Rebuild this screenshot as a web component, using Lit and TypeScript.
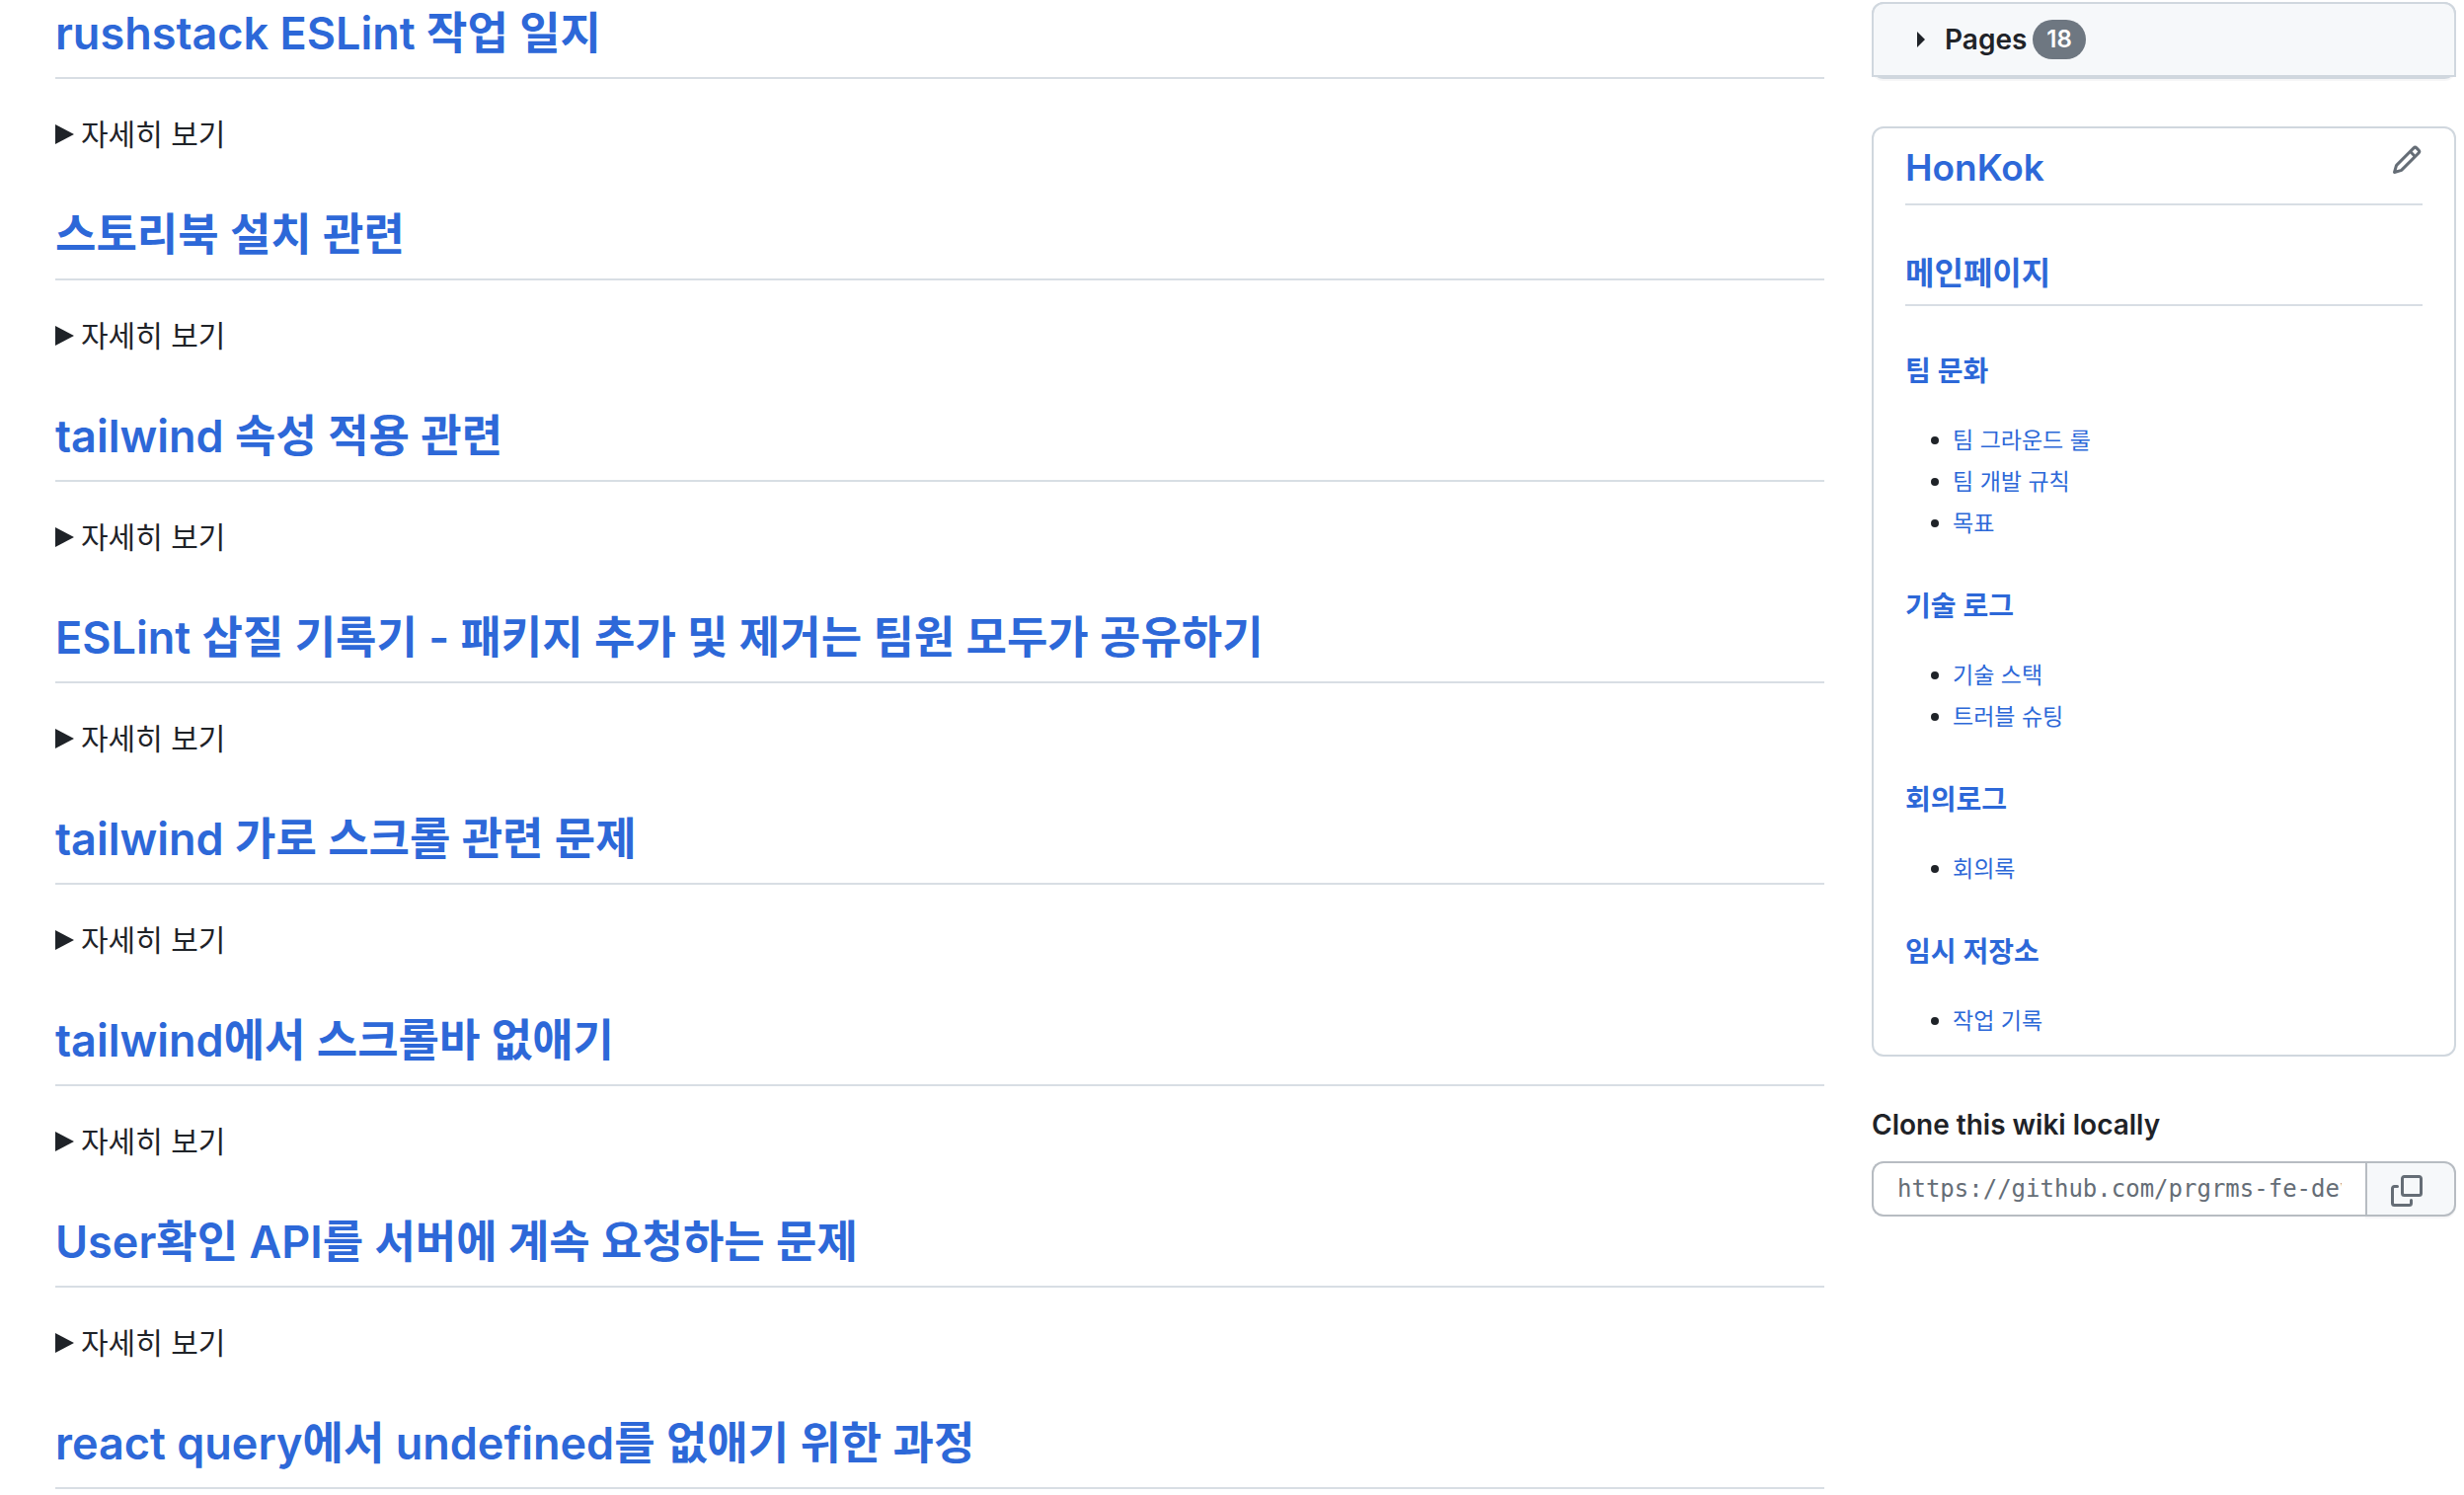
import { LitElement, html, css, nothing } from "lit";
import { customElement } from "lit/decorators.js";

const entries = [
  { title: "rushstack ESLint 작업 일지", more: true },
  { title: "스토리북 설치 관련", more: true },
  { title: "tailwind 속성 적용 관련", more: true },
  { title: "ESLint 삽질 기록기 - 패키지 추가 및 제거는 팀원 모두가 공유하기", more: true },
  { title: "tailwind 가로 스크롤 관련 문제", more: true },
  { title: "tailwind에서 스크롤바 없애기", more: true },
  { title: "User확인 API를 서버에 계속 요청하는 문제", more: true },
  { title: "react query에서 undefined를 없애기 위한 과정", more: false },
];

const groups = [
  { title: "팀 문화", links: ["팀 그라운드 룰", "팀 개발 규칙", "목표"] },
  { title: "기술 로그", links: ["기술 스택", "트러블 슈팅"] },
  { title: "회의로그", links: ["회의록"] },
  { title: "임시 저장소", links: ["작업 기록"] },
];

const shared = css`
  :host {
    display: block;
  }
  * {
    box-sizing: border-box;
  }
  a {
    color: #2d68d8;
    text-decoration: none;
  }
  h1, h2, h3, ul {
    margin: 0;
    padding: 0;
  }
  summary {
    cursor: pointer;
    list-style: none;
  }
  summary::-webkit-details-marker {
    display: none;
  }
`;

@customElement("wiki-content")
export class WikiContent extends LitElement {
  static styles = [
    shared,
    css`
      .title {
        padding-bottom: 14px;
        border-bottom: 2px solid #d8dee4;
        font-size: 45px;
        font-weight: 600;
        line-height: 60px;
      }
      .more {
        margin: 32px 0 48px;
      }
      .toggle {
        display: flex;
        align-items: center;
        gap: 6px;
        width: max-content;
        font-size: 30px;
        line-height: 48px;
      }
      .marker {
        width: 20px;
        height: 22px;
        fill: currentColor;
      }
    `,
  ];

  render() {
    return html`${entries.map(
      (entry) => html`
        <h2 class="title"><a href="#">${entry.title}</a></h2>
        ${entry.more
          ? html`
              <details class="more">
                <summary class="toggle">
                  <svg class="marker" viewBox="0 0 20 22" aria-hidden="true"><path d="M0 1v20l19-10z" /></svg>
                  자세히 보기
                </summary>
              </details>
            `
          : nothing}
      `
    )}`;
  }
}

@customElement("wiki-sidebar")
export class WikiSidebar extends LitElement {
  static styles = [
    shared,
    css`
      .box {
        border: 2px solid #d0d7de;
        border-radius: 12px;
      }
      .pages {
        margin-bottom: 48px;
        box-shadow: 0 2px 0 rgba(31, 35, 40, 0.04);
      }
      .pages-head {
        display: flex;
        align-items: center;
        height: 76px;
        margin: -2px -2px 0;
        padding: 0 44px;
        border: 2px solid #d0d7de;
        border-radius: 12px 12px 0 0;
        background: #f6f8fa;
        font-size: 28px;
        font-weight: 600;
      }
      .caret {
        width: 8px;
        height: 16px;
        margin-right: 20px;
        fill: currentColor;
      }
      .count {
        margin-left: 6px;
        padding: 0 14px;
        border-radius: 20px;
        background: #6e7781;
        color: #fff;
        font-size: 24px;
        font-weight: 600;
        line-height: 40px;
        text-align: center;
      }
      .nav {
        padding: 16px 32px;
      }
      .nav-top {
        display: flex;
        align-items: flex-start;
        justify-content: space-between;
        border-bottom: 2px solid #d8dee4;
      }
      .name {
        padding-bottom: 12px;
        font-size: 37px;
        font-weight: 600;
        line-height: 48px;
      }
      .edit {
        display: flex;
        color: #656d76;
      }
      .icon {
        width: 32px;
        height: 32px;
        fill: currentColor;
      }
      .main-page {
        margin-top: 48px;
        padding-bottom: 10px;
        border-bottom: 2px solid #d8dee4;
        font-size: 32px;
        font-weight: 600;
        line-height: 42px;
      }
      .group {
        margin: 48px 0 34px;
        font-size: 28px;
        font-weight: 600;
        line-height: 36px;
      }
      .links {
        display: grid;
        gap: 6px;
        list-style: none;
        font-size: 23px;
        line-height: 36px;
      }
      .link {
        display: flex;
        align-items: center;
        gap: 14px;
        padding-left: 26px;
      }
      .link::before {
        content: "";
        width: 8px;
        height: 8px;
        border-radius: 50%;
        background: #1f2328;
      }
      .clone-label {
        display: block;
        margin: 48px 0 16px;
        font-size: 28px;
        font-weight: 600;
        line-height: 42px;
      }
      .clone {
        display: flex;
        height: 56px;
      }
      .url {
        flex: 1;
        min-width: 0;
        padding: 0 24px;
        border: 2px solid #b7bcc2;
        border-right: 0;
        border-radius: 12px 0 0 12px;
        background: #fff;
        color: #656d76;
        font-family: "DejaVu Sans Mono", monospace;
        font-size: 24px;
      }
      .copy {
        display: flex;
        align-items: center;
        padding: 4px 32px 0 24px;
        border: 2px solid #b7bcc2;
        border-radius: 0 12px 12px 0;
        background: #f6f8fa;
        box-shadow: 0 2px 0 rgba(31, 35, 40, 0.04);
        color: #656d76;
      }
    `,
  ];

  render() {
    return html`
      <details class="box pages">
        <summary class="pages-head">
          <svg class="caret" viewBox="0 0 8 16" aria-hidden="true"><path d="M0 0v16l8-8z" /></svg>
          Pages <span class="count">18</span>
        </summary>
      </details>
      <nav class="box nav">
        <div class="nav-top">
          <h1 class="name"><a href="#">HonKok</a></h1>
          <a class="edit" href="#" aria-label="Edit sidebar">
            <svg class="icon" viewBox="0 0 16 16" aria-hidden="true">
              <path d="M11.013 1.427a1.75 1.75 0 0 1 2.474 0l1.086 1.086a1.75 1.75 0 0 1 0 2.474l-8.61 8.61c-.21.21-.47.364-.756.445l-3.251.93a.75.75 0 0 1-.927-.928l.929-3.25c.081-.286.235-.547.445-.758l8.61-8.61Zm.176 4.823L9.75 4.81l-6.286 6.287a.253.253 0 0 0-.064.108l-.558 1.953 1.953-.558a.253.253 0 0 0 .108-.064Zm1.238-3.763a.25.25 0 0 0-.354 0L10.811 3.75l1.439 1.44 1.263-1.263a.25.25 0 0 0 0-.354Z" />
            </svg>
          </a>
        </div>
        <h2 class="main-page"><a href="#">메인페이지</a></h2>
        ${groups.map(
          (group) => html`
            <h3 class="group"><a href="#">${group.title}</a></h3>
            <ul class="links">
              ${group.links.map((link) => html`<li class="link"><a href="#">${link}</a></li>`)}
            </ul>
          `
        )}
      </nav>
      <label class="clone-label" for="clone-url">Clone this wiki locally</label>
      <div class="clone">
        <input class="url" id="clone-url" type="text" readonly value="https://github.com/prgrms-fe-devcourse" />
        <button class="copy" type="button" aria-label="Copy">
          <svg class="icon" viewBox="0 0 16 16" aria-hidden="true">
            <path d="M0 6.75C0 5.784.784 5 1.75 5h1.5a.75.75 0 0 1 0 1.5h-1.5a.25.25 0 0 0-.25.25v7.5c0 .138.112.25.25.25h7.5a.25.25 0 0 0 .25-.25v-1.5a.75.75 0 0 1 1.5 0v1.5A1.75 1.75 0 0 1 9.25 16h-7.5A1.75 1.75 0 0 1 0 14.25Z" />
            <path d="M5 1.75C5 .784 5.784 0 6.75 0h7.5C15.216 0 16 .784 16 1.75v7.5A1.75 1.75 0 0 1 14.25 11h-7.5A1.75 1.75 0 0 1 5 9.25Zm1.75-.25a.25.25 0 0 0-.25.25v7.5c0 .138.112.25.25.25h7.5a.25.25 0 0 0 .25-.25v-7.5a.25.25 0 0 0-.25-.25Z" />
          </svg>
        </button>
      </div>
    `;
  }
}

@customElement("app-root")
export class AppRoot extends LitElement {
  static styles = css`
    :host {
      display: block;
      background: #fff;
      color: #1f2328;
      font-family: Inter, "Noto Sans CJK KR", sans-serif;
    }
    .page {
      display: grid;
      grid-template-columns: minmax(0, 1fr) 592px;
      align-items: start;
      gap: 48px;
      padding: 2px 8px 0 56px;
    }
    .main {
      padding-top: 2px;
    }
  `;

  render() {
    return html`
      <div class="page">
        <wiki-content class="main"></wiki-content>
        <wiki-sidebar></wiki-sidebar>
      </div>
    `;
  }
}
